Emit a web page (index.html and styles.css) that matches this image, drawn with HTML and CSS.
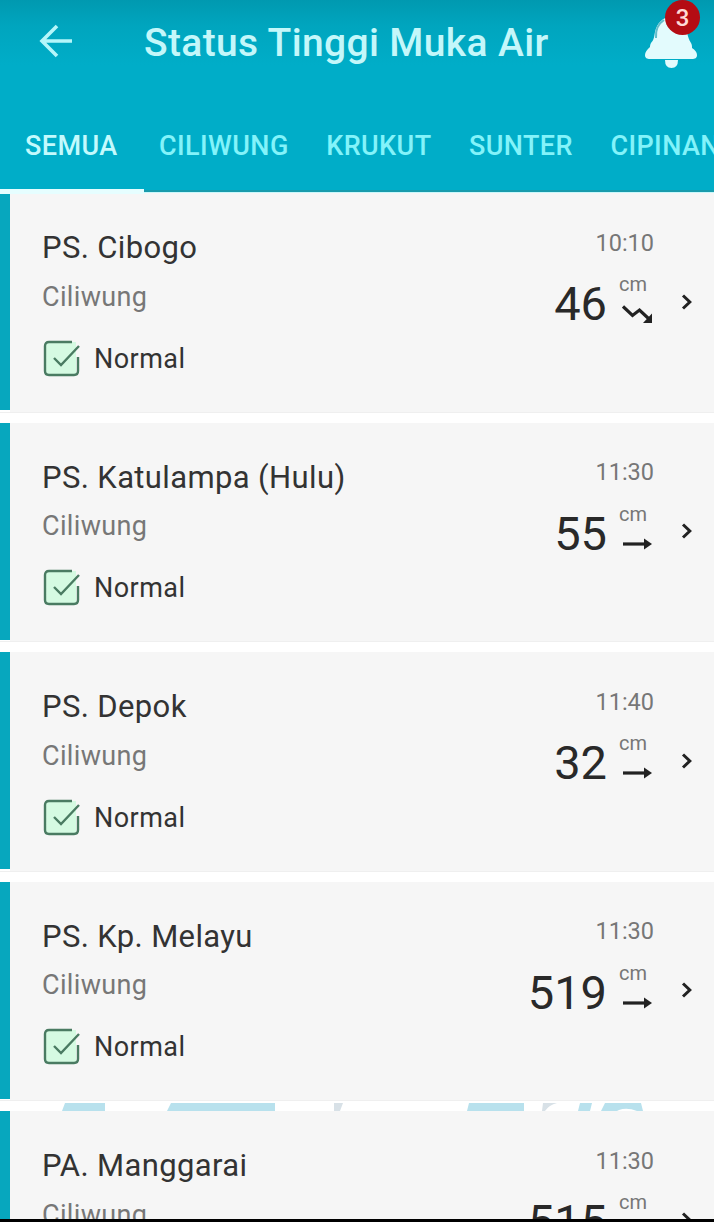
FILE: index.html
```
<!DOCTYPE html>
<html lang="id">
<head>
<meta charset="utf-8">
<title>Status Tinggi Muka Air</title>
<link rel="stylesheet" href="styles.css">
</head>
<body>
<svg class="defs" width="0" height="0">
  <symbol id="check" viewBox="0 0 38 38"><path class="check-fill" d="M5 2h28v34H5q-3 0-3-3V5q0-3 3-3z"/><path d="M29 2H6Q2 2 2 6v25q0 4 4 4h25q4 0 4-4V17M11 18l7 7L36 6"/></symbol>
  <symbol id="flat" viewBox="0 0 32 20"><path class="stroke" d="M1 10h23"/><path d="M22 4.500l8 5.500-8 5.500z"/></symbol>
  <symbol id="down" viewBox="0 0 32 20"><path class="stroke" d="M1 2.500l9.500 9 7-5.500 9 8.500"/><path d="M30 9.500v9.500h-9z"/></symbol>
  <symbol id="next" viewBox="0 0 12 18"><path d="M2 2.500L8.800 9 2 15.500"/></symbol>
</svg>
<div class="app">
  <header class="header">
    <div class="toolbar">
      <svg class="back" viewBox="0 0 34 34"><path d="M33 17H3M18 2L3 17l15 15"/></svg>
      <h1 class="title">Status Tinggi Muka Air</h1>
      <div class="bell">
        <svg class="bell-icon" viewBox="0 0 54 56"><path d="M27 3c-8 0-14 6-16 15-1 5-1 8-4 11-1 2-1 3-1 4-3 3-5 5-5 8 0 3 2 4 5 4h42c3 0 5-1 5-4 0-3-2-5-5-7 0-2 0-3-1-5-2-3-3-6-4-11C41 9 36 3 27 3zM21 46h13q0 8-6.500 8T21 46z"/><path class="bell-line" d="M20 6Q11 12 12 24"/></svg>
        <span class="badge">3</span>
      </div>
    </div>
    <nav class="tabs">
      <span class="tab active">SEMUA</span>
      <span class="tab">CILIWUNG</span>
      <span class="tab">KRUKUT</span>
      <span class="tab">SUNTER</span>
      <span class="tab">CIPINANG</span>
    </nav>
  </header>
  <main class="list">
    <article class="card">
      <div class="place"><h2 class="name">PS. Cibogo</h2><p class="river">Ciliwung</p><p class="state"><svg class="check"><use href="#check"/></svg>Normal</p></div>
      <div class="reading"><time class="time">10:10</time><div class="level"><b class="value">46</b><div class="unit"><span class="cm">cm</span><svg class="trend"><use href="#down"/></svg></div></div></div>
      <svg class="next"><use href="#next"/></svg>
    </article>
    <article class="card">
      <div class="place"><h2 class="name">PS. Katulampa (Hulu)</h2><p class="river">Ciliwung</p><p class="state"><svg class="check"><use href="#check"/></svg>Normal</p></div>
      <div class="reading"><time class="time">11:30</time><div class="level"><b class="value">55</b><div class="unit"><span class="cm">cm</span><svg class="trend"><use href="#flat"/></svg></div></div></div>
      <svg class="next"><use href="#next"/></svg>
    </article>
    <article class="card">
      <div class="place"><h2 class="name">PS. Depok</h2><p class="river">Ciliwung</p><p class="state"><svg class="check"><use href="#check"/></svg>Normal</p></div>
      <div class="reading"><time class="time">11:40</time><div class="level"><b class="value">32</b><div class="unit"><span class="cm">cm</span><svg class="trend"><use href="#flat"/></svg></div></div></div>
      <svg class="next"><use href="#next"/></svg>
    </article>
    <article class="card">
      <div class="place"><h2 class="name">PS. Kp. Melayu</h2><p class="river">Ciliwung</p><p class="state"><svg class="check"><use href="#check"/></svg>Normal</p></div>
      <div class="reading"><time class="time">11:30</time><div class="level"><b class="value">519</b><div class="unit"><span class="cm">cm</span><svg class="trend"><use href="#flat"/></svg></div></div></div>
      <svg class="next"><use href="#next"/></svg>
    </article>
    <svg class="backdrop" viewBox="0 0 714 8"><path d="M65 0h40v8H62zM171 0h104v8H167zM469 0h55v8H467zM580 0h12l-2 8h-12zM605 0h36l2 8h-6q-10-4-18-1l-2 1h-16z"/><path class="pale" d="M334 0h9l-3 8h-6zM543 0h14q-8 2-12 8h-3z"/></svg>
    <article class="card">
      <div class="place"><h2 class="name">PA. Manggarai</h2><p class="river">Ciliwung</p><p class="state"><svg class="check"><use href="#check"/></svg>Normal</p></div>
      <div class="reading"><time class="time">11:30</time><div class="level"><b class="value">515</b><div class="unit"><span class="cm">cm</span><svg class="trend"><use href="#flat"/></svg></div></div></div>
      <svg class="next"><use href="#next"/></svg>
    </article>
  </main>
</div>
</body>
</html>
```
FILE: styles.css
```
* { box-sizing: border-box; }
body, h1, h2, p { margin: 0; font-weight: 400; }
body { background: #000; font-family: Roboto, sans-serif; }
.defs { position: absolute; }
.app { height: 1219px; overflow: hidden; background: #fff; }
.header { height: 192px; background: linear-gradient(#0099b0 0, #00a5be 25px, #00adc8 65px); border-bottom: 2px solid #199bac; display: flex; flex-direction: column; }
.toolbar { height: 84px; flex: none; display: flex; padding-left: 39px; }
.back { width: 34px; height: 34px; margin-top: 24px; fill: none; stroke: #b5f6fa; stroke-width: 3.6; }
.title { margin-left: 71px; width: 500px; font-size: 39px; font-weight: 500; letter-spacing: 0.35px; line-height: 87px; color: #c4f7fa; white-space: nowrap; }
.bell { position: relative; width: 54px; height: 56px; margin: 14px 16px 0 0; flex: none; }
.bell-icon { width: 54px; height: 56px; fill: #e3fbfd; }
.bell-line { fill: none; stroke: #64bdca; stroke-width: 2; }
.badge { position: absolute; left: 21px; top: -14px; width: 35px; height: 35px; border-radius: 50%; background: #b40c13; color: #ffd9d5; font-size: 24px; font-weight: 500; line-height: 36px; text-align: center; }
.tabs { flex: 1; display: flex; gap: 37.500px; overflow: hidden; padding-left: 25px; }
.tab { font-size: 27px; font-weight: 500; letter-spacing: 0.4px; line-height: 125px; color: #83f3fa; white-space: nowrap; }
.tab.active { color: #c3fafd; margin-right: 4px; }
.list { position: relative; border-top: 1px solid #cbf8fb; }
.list::before { content: ""; position: absolute; left: 0; top: -4px; width: 144px; height: 5px; background: #e6feff; }
.card { display: flex; height: 219.500px; margin-bottom: 10px; background: linear-gradient(#07a7be, #07a7be) 0 0 / 10px 217px no-repeat, linear-gradient(#fff, #fff) 0 0 / 10px 100% no-repeat, #f6f6f6; padding-left: 42px; border-bottom: 1px solid #efefef; }
.place { flex: 1; padding-top: 36px; }
.name { font-size: 31px; letter-spacing: 0.37px; line-height: 38px; color: #333; }
.river { font-size: 27px; letter-spacing: 0.35px; line-height: 32px; margin-top: 13.500px; color: #777; }
.state { display: flex; align-items: center; gap: 13.500px; height: 38px; margin: 27px 0 0 0.5px; font-size: 27px; letter-spacing: 0.45px; color: #333; }
.check { width: 38px; height: 38px; fill: none; stroke: #4a7b62; stroke-width: 2.400; }
.check-fill { fill: #d5fae2; stroke: none; }
.reading { width: 180px; padding-top: 35.500px; display: flex; flex-direction: column; align-items: flex-end; }
.time { font-size: 23.500px; line-height: 28px; margin-right: 1px; color: #777; }
.level { display: flex; margin-top: 19.500px; }
.value { font-size: 47px; font-weight: 400; line-height: 56px; color: #292929; }
.unit { display: flex; flex-direction: column; width: 48px; padding-left: 12px; }
.cm { font-size: 20px; line-height: 16px; color: #777; }
.trend { width: 32px; height: 20px; margin: 12px 0 0 3px; fill: #222; }
.trend .stroke, .stroke { stroke: #222; stroke-width: 3.200; fill: none; }
.next { width: 12px; height: 18px; margin: 99.500px 21px 0 26px; fill: none; stroke: #222; stroke-width: 3; }
.backdrop { position: absolute; left: 0; top: 910px; width: 714px; height: 8px; fill: #b8e1ed; }
.pale { fill: #d8e1e7; }
```
